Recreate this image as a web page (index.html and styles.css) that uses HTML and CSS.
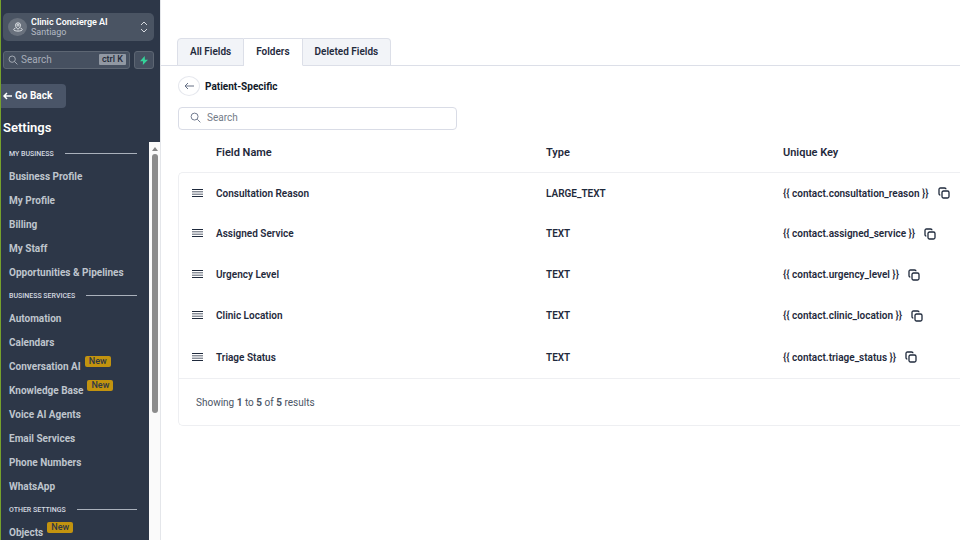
FILE: index.html
```html
<!DOCTYPE html>
<html lang="en">
<head>
    <meta charset="UTF-8">
    <meta name="viewport" content="width=device-width, initial-scale=1.0">
    <title>Custom Fields</title>
    <link rel="stylesheet" href="styles.css">
</head>
<body>
    <svg class="sprite" aria-hidden="true">
        <symbol id="search" viewBox="0 0 12 12">
            <circle cx="5" cy="5" r="3.8"/>
            <path d="M8 8l3.3 3.3"/>
        </symbol>
        <symbol id="drag" viewBox="0 0 12 9">
            <path d="M0 .5h11M0 7.500h11"/>
            <path d="M0 2.800h11M0 5.200h11" opacity=".75"/>
        </symbol>
        <symbol id="copy" viewBox="0 0 12 12">
            <rect x="4" y="4" width="7" height="7" rx="1.5"/>
            <path d="M2.3 8C1.3 8 1 7.400 1 6.500V2.500C1 1.500 1.500 1 2.500 1h4C7.500 1 8 1.400 8 2.300"/>
        </symbol>
    </svg>

    <aside class="sidebar">
        <button class="account">
            <span class="avatar">
                <svg width="10" height="10" viewBox="0 0 10 10">
                    <circle cx="5" cy="3.200" r="1"/>
                    <path d="M5 7.300C3.500 5.700 2.500 4.600 2.500 3.300a2.500 2.500 0 0 1 5 0C7.500 4.600 6.500 5.700 5 7.300zM2.500 6C1.300 6.400.7 7 .8 7.700c.3 1.800 8.100 1.800 8.400 0C9.300 7 8.700 6.400 7.500 6"/>
                </svg>
            </span>
            <span class="account-text">
                <strong>Clinic Concierge AI</strong>
                <span>Santiago</span>
            </span>
            <svg class="sort" width="8" height="12" viewBox="0 0 8 12">
                <path d="M1 4l3-3 3 3M1 8l3 3 3-3"/>
            </svg>
        </button>

        <div class="quick">
            <label class="quick-search">
                <svg class="icon" width="10" height="10"><use href="#search"/></svg>
                <input type="text" placeholder="Search" aria-label="Search menu">
                <kbd>ctrl K</kbd>
            </label>
            <button class="bolt" aria-label="Quick actions">
                <svg width="8" height="9" viewBox="0 0 8 9"><path d="M4.700 0L0 5.200h3L2.800 9 8 3.700H4.900z"/></svg>
            </button>
        </div>

        <button class="go-back">
            <svg width="9" height="8" viewBox="0 0 9 8"><path d="M9 4H1M4 1L1 4l3 3"/></svg>
            Go Back
        </button>

        <h1>Settings</h1>

        <div class="menu">
            <nav>
                <h2>MY BUSINESS</h2>
                <a href="#">Business Profile</a>
                <a href="#">My Profile</a>
                <a href="#">Billing</a>
                <a href="#">My Staff</a>
                <a href="#">Opportunities &amp; Pipelines</a>
                <h2>BUSINESS SERVICES</h2>
                <a href="#">Automation</a>
                <a href="#">Calendars</a>
                <a href="#">Conversation AI <span class="new">New</span></a>
                <a href="#">Knowledge Base <span class="new">New</span></a>
                <a href="#">Voice AI Agents</a>
                <a href="#">Email Services</a>
                <a href="#">Phone Numbers</a>
                <a href="#">WhatsApp</a>
                <h2>OTHER SETTINGS</h2>
                <a href="#">Objects <span class="new">New</span></a>
            </nav>
            <div class="scrollbar">
                <svg width="6" height="4" viewBox="0 0 6 4"><path d="M3 0l3 4H0z"/></svg>
                <div class="thumb"></div>
            </div>
        </div>
    </aside>

    <main>
        <div class="tabs">
            <button>All Fields</button>
            <button class="active">Folders</button>
            <button>Deleted Fields</button>
        </div>

        <div class="content">
            <div class="folder">
                <button class="back" aria-label="Back">
                    <svg width="10" height="8" viewBox="0 0 10 8"><path d="M10 4H1M4 1L1 4l3 3"/></svg>
                </button>
                <h3>Patient-Specific</h3>
            </div>

            <label class="search">
                <svg class="icon" width="11" height="11"><use href="#search"/></svg>
                <input type="text" placeholder="Search" aria-label="Search fields">
            </label>

            <table>
                <thead>
                    <tr>
                        <th class="handle"></th>
                        <th class="name">Field Name</th>
                        <th class="type">Type</th>
                        <th>Unique Key</th>
                    </tr>
                </thead>
                <tbody>
                    <tr>
                        <td><svg class="drag" width="12" height="9"><use href="#drag"/></svg></td>
                        <td>Consultation Reason</td>
                        <td>LARGE_TEXT</td>
                        <td><div class="key">{{ contact.consultation_reason }} <button aria-label="Copy key"><svg width="12" height="12"><use href="#copy"/></svg></button></div></td>
                    </tr>
                    <tr>
                        <td><svg class="drag" width="12" height="9"><use href="#drag"/></svg></td>
                        <td>Assigned Service</td>
                        <td>TEXT</td>
                        <td><div class="key">{{ contact.assigned_service }} <button aria-label="Copy key"><svg width="12" height="12"><use href="#copy"/></svg></button></div></td>
                    </tr>
                    <tr>
                        <td><svg class="drag" width="12" height="9"><use href="#drag"/></svg></td>
                        <td>Urgency Level</td>
                        <td>TEXT</td>
                        <td><div class="key">{{ contact.urgency_level }} <button aria-label="Copy key"><svg width="12" height="12"><use href="#copy"/></svg></button></div></td>
                    </tr>
                    <tr>
                        <td><svg class="drag" width="12" height="9"><use href="#drag"/></svg></td>
                        <td>Clinic Location</td>
                        <td>TEXT</td>
                        <td><div class="key">{{ contact.clinic_location }} <button aria-label="Copy key"><svg width="12" height="12"><use href="#copy"/></svg></button></div></td>
                    </tr>
                    <tr>
                        <td><svg class="drag" width="12" height="9"><use href="#drag"/></svg></td>
                        <td>Triage Status</td>
                        <td>TEXT</td>
                        <td><div class="key">{{ contact.triage_status }} <button aria-label="Copy key"><svg width="12" height="12"><use href="#copy"/></svg></button></div></td>
                    </tr>
                </tbody>
                <tfoot>
                    <tr>
                        <td colspan="4">Showing <b>1</b> to <b>5</b> of <b>5</b> results</td>
                    </tr>
                </tfoot>
            </table>
        </div>
    </main>
</body>
</html>
```
FILE: styles.css
```css
* {
    box-sizing: border-box;
}
body {
    margin: 0;
    height: 100vh;
    display: flex;
    overflow: hidden;
    font-family: Roboto, "Liberation Sans", sans-serif;
    font-size: 10px;
    color: #1f2a3c;
    background: #fff;
}
h1, h2, h3 {
    margin: 0;
}
button, input {
    font: inherit;
    color: inherit;
    margin: 0;
    padding: 0;
    border: none;
    background: none;
}
button {
    cursor: pointer;
}
input {
    outline: none;
    min-width: 0;
    flex: 1;
}
svg {
    fill: none;
    stroke: currentColor;
    flex: none;
    display: block;
}
.sprite {
    position: absolute;
    width: 0;
    height: 0;
}

/* sidebar */
.sidebar {
    flex: none;
    width: 160px;
    display: flex;
    flex-direction: column;
    padding-top: 13px;
    background: #2d3748;
    border-left: 1px solid #76a12c;
    color: #fff;
}
.account {
    display: flex;
    align-items: center;
    gap: 4px;
    height: 28px;
    margin: 0 6px 0 2px;
    padding: 0 6px 0 5px;
    border-radius: 5px;
    background: #4a5463;
    text-align: left;
}
.avatar {
    display: flex;
    align-items: center;
    justify-content: center;
    width: 19px;
    height: 18px;
    border-radius: 50%;
    background: #69717d;
    color: #e2e6ea;
}
.account-text {
    flex: 1;
    display: flex;
    flex-direction: column;
    font-size: 9px;
    line-height: 10px;
    color: #b4bac3;
}
.account-text strong {
    font-weight: 600;
    color: #fff;
}
.sort {
    color: #d5d9df;
}
.quick {
    display: flex;
    gap: 4px;
    margin: 10px 6px 0 2px;
}
.quick-search {
    flex: 1;
    min-width: 0;
    display: flex;
    align-items: center;
    gap: 3px;
    height: 18px;
    padding: 0 3px 1px 4px;
    border: 1px solid #5d6673;
    border-radius: 3px;
    background: #465060;
    color: #b4bac3;
}
.quick-search input::placeholder {
    color: #a6adb8;
}
kbd {
    padding: 0 3px;
    border-radius: 1px;
    background: #9198a3;
    color: #1f2938;
    font: 500 9px/11px Roboto, sans-serif;
}
.bolt {
    display: flex;
    align-items: center;
    justify-content: center;
    width: 20px;
    height: 18px;
    border: 1px solid #5d6673;
    border-radius: 3px;
    background: #465060;
}
.bolt svg {
    fill: #34d399;
    stroke: none;
}
.go-back {
    align-self: flex-start;
    display: flex;
    align-items: center;
    gap: 3px;
    height: 24px;
    margin-top: 15px;
    padding: 0 14px 1px 2px;
    border-radius: 0 4px 4px 0;
    background: #4a5568;
    font-weight: 700;
}
.go-back svg {
    stroke-width: 1.5;
}
.sidebar h1 {
    margin: 10px 2px 4px;
    font-size: 13px;
    font-weight: 600;
    line-height: 20px;
}
.menu {
    flex: 1;
    min-height: 0;
    display: flex;
}
nav {
    flex: 1;
    overflow: hidden;
    padding: 0 12px 0 8px;
}
nav h2 {
    display: flex;
    align-items: center;
    gap: 11px;
    height: 22px;
    padding-top: 1px;
    font-size: 7px;
    font-weight: 500;
    color: #d5dae1;
}
nav h2::after {
    content: "";
    flex: 1;
    height: 1px;
    background: #aab1bc;
}
nav a {
    display: flex;
    align-items: center;
    gap: 4px;
    height: 24px;
    color: #bfc5cd;
    font-weight: 700;
    text-decoration: none;
    white-space: nowrap;
}
.new {
    align-self: flex-start;
    margin-top: 2px;
    padding: 0 4px;
    border-radius: 2px;
    background: #c2930f;
    color: #2d3748;
    font-size: 9px;
    font-weight: 500;
    line-height: 11px;
}
.scrollbar {
    width: 11px;
    display: flex;
    flex-direction: column;
    align-items: center;
    gap: 3px;
    padding-top: 5px;
    background: #fafafa;
}
.scrollbar svg {
    fill: #858585;
    stroke: none;
}
.thumb {
    width: 6px;
    height: 66%;
    border-radius: 3px;
    background: #8b8b8b;
}

/* main */
main {
    flex: 1;
    min-width: 0;
    padding-top: 38px;
    border-left: 1px solid #e4e6ea;
}
.tabs {
    display: flex;
    padding-left: 16px;
    border-bottom: 1px solid #dcdfe8;
}
.tabs button {
    height: 28px;
    margin-bottom: -1px;
    padding: 0 12px 2px;
    border: 1px solid #dcdfe8;
    border-left: none;
    background: #f2f4f8;
    font-weight: 600;
}
.tabs button:first-child {
    border-left: 1px solid #dcdfe8;
    border-radius: 4px 0 0 0;
}
.tabs button:last-child {
    border-radius: 0 4px 0 0;
}
.tabs .active {
    background: #fff;
    border-bottom-color: #fff;
}
.content {
    padding: 10px 0 0 17px;
}
.folder {
    display: flex;
    align-items: center;
    gap: 5px;
}
.back {
    display: flex;
    align-items: center;
    justify-content: center;
    width: 22px;
    height: 20px;
    border: 1px solid #e6e8ee;
    border-radius: 50%;
    color: #667085;
}
.folder h3 {
    font-size: 10px;
    font-weight: 700;
    color: #101828;
}
.search {
    display: flex;
    align-items: center;
    gap: 6px;
    width: 279px;
    height: 23px;
    margin-top: 11px;
    padding: 0 11px 2px;
    border: 1px solid #d9dce6;
    border-radius: 4px;
    color: #667085;
}
.search input::placeholder {
    color: #737b88;
}
table {
    width: 100%;
    margin-top: 3px;
    border-spacing: 0;
    table-layout: fixed;
}
th {
    height: 39px;
    padding: 0;
    text-align: left;
    font-size: 11px;
    font-weight: 600;
}
th.handle {
    width: 38px;
}
th.name {
    width: 42.2%;
}
th.type {
    width: 30.3%;
}
td {
    height: 41px;
    padding: 0;
    font-weight: 600;
}
td:first-child {
    padding-left: 13px;
    border-left: 1px solid #eeeff2;
}
tbody tr:first-child td {
    border-top: 1px solid #eeeff2;
}
tbody tr:first-child td:first-child {
    border-top-left-radius: 5px;
}
tbody tr:last-child td {
    height: 42px;
}
.drag {
    color: #1f2a3c;
}
.key {
    display: flex;
    align-items: center;
    gap: 9px;
    white-space: nowrap;
}
.key svg {
    stroke-width: 1.3;
}
tfoot td {
    height: 48px;
    border-top: 1px solid #eeeff2;
    border-bottom: 1px solid #eeeff2;
    border-bottom-left-radius: 5px;
    color: #4b5565;
    font-weight: 400;
}
tfoot td:first-child {
    padding-left: 17px;
}
tfoot b {
    font-weight: 700;
}
```
